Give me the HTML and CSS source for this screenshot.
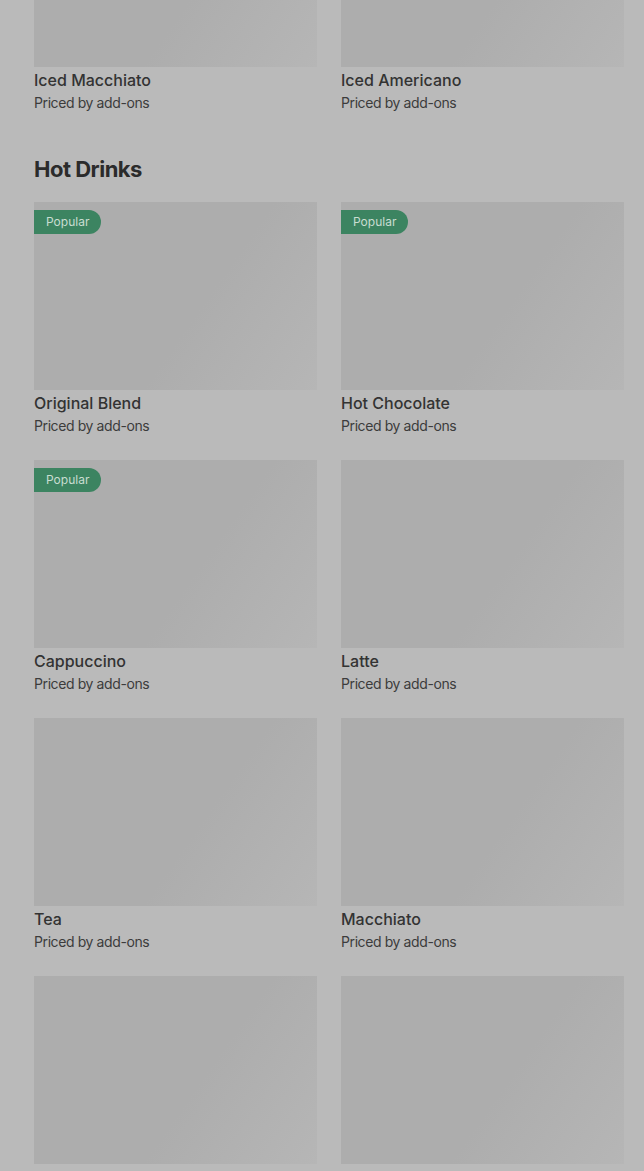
FILE: index.html
```html
<!DOCTYPE html>
<html>
<head>
  <title>Menu</title>
  <link rel="stylesheet" href="styles.css">
</head>
<body>
<div class="menu">
  <div class="grid grid-top">
    <div class="item">
      <div class="thumb"></div>
      <div class="name">Iced Macchiato</div>
      <div class="price">Priced by add-ons</div>
    </div>
    <div class="item">
      <div class="thumb"></div>
      <div class="name">Iced Americano</div>
      <div class="price">Priced by add-ons</div>
    </div>
  </div>

  <h2 class="section-title">Hot Drinks</h2>
  <div class="grid">
    <div class="item">
      <div class="thumb"><span class="badge">Popular</span></div>
      <div class="name">Original Blend</div>
      <div class="price">Priced by add-ons</div>
    </div>
    <div class="item">
      <div class="thumb"><span class="badge">Popular</span></div>
      <div class="name">Hot Chocolate</div>
      <div class="price">Priced by add-ons</div>
    </div>
    <div class="item">
      <div class="thumb"><span class="badge">Popular</span></div>
      <div class="name">Cappuccino</div>
      <div class="price">Priced by add-ons</div>
    </div>
    <div class="item">
      <div class="thumb"></div>
      <div class="name">Latte</div>
      <div class="price">Priced by add-ons</div>
    </div>
    <div class="item">
      <div class="thumb"></div>
      <div class="name">Tea</div>
      <div class="price">Priced by add-ons</div>
    </div>
    <div class="item">
      <div class="thumb"></div>
      <div class="name">Macchiato</div>
      <div class="price">Priced by add-ons</div>
    </div>
    <div class="item">
      <div class="thumb"></div>
      <div class="name">Vanilla Latte</div>
      <div class="price">Priced by add-ons</div>
    </div>
    <div class="item">
      <div class="thumb"></div>
      <div class="name">Espresso</div>
      <div class="price">Priced by add-ons</div>
    </div>
  </div>
</div>
</body>
</html>
```

FILE: styles.css
```css
* {
  box-sizing: border-box;
}
html, body {
  height: 1171px;
  overflow: hidden;
}
body {
  margin: 0;
  padding: 0;
  background-color: #bababa;
  font-family: Inter, "Liberation Sans", sans-serif;
  color: #2e2e2e;
}
.menu {
  padding: 0 20px 0 34px;
  margin-top: -121px;
}
.grid {
  display: grid;
  grid-template-columns: 1fr 1fr;
  column-gap: 24px;
  row-gap: 23px;
}
.thumb {
  position: relative;
  height: 188px;
  background: linear-gradient(125deg, #adadad 0%, #adadad 58%, #b6b6b6 100%);
}
.name {
  margin-top: 2px;
  font-size: 16px;
  font-weight: 500;
  line-height: 22px;
  color: #333;
}
.price {
  margin-top: 1px;
  font-size: 14px;
  line-height: 22px;
  letter-spacing: -0.4px;
  color: #3c3c3c;
}
.section-title {
  margin: 40px 0 18px;
  font-size: 22px;
  font-weight: 700;
  line-height: 30px;
  letter-spacing: -0.5px;
  color: #2b2b2b;
}
.badge {
  position: absolute;
  top: 8px;
  left: 0;
  height: 24px;
  padding: 0 12px;
  border-radius: 0 12px 12px 0;
  background-color: #3c8461;
  color: #c9ddd1;
  font-size: 12px;
  line-height: 24px;
}
```
